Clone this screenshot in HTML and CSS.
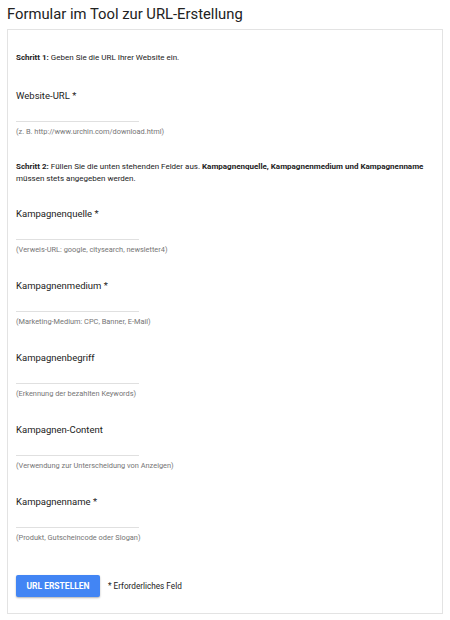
FILE: index.html
```html
<!DOCTYPE html>
<html lang="de">
<head>
<meta charset="utf-8">
<title>Formular im Tool zur URL-Erstellung</title>
<link rel="stylesheet" href="styles.css">
</head>
<body>
<h1 class="title">Formular im Tool zur URL-Erstellung</h1>
<form class="card">
  <p class="step">
    <b>Schritt 1:</b> Geben Sie die URL Ihrer Website ein.</p>
  <div class="field field-first">
    <label class="label">Website-URL *</label>
    <div class="input"></div>
    <div class="hint">(z. B. http://www.urchin.com/download.html)</div>
  </div>
  <p class="step step-two"><b>Schritt 2:</b> Füllen Sie die unten stehenden Felder aus. <b>Kampagnenquelle, Kampagnenmedium und Kampagnenname</b> müssen stets angegeben werden.</p>
  <div class="field">
    <label class="label">Kampagnenquelle *</label>
    <div class="input"></div>
    <div class="hint">(Verweis-URL: google, citysearch, newsletter4)</div>
  </div>
  <div class="field">
    <label class="label">Kampagnenmedium *</label>
    <div class="input"></div>
    <div class="hint">(Marketing-Medium: CPC, Banner, E-Mail)</div>
  </div>
  <div class="field">
    <label class="label">Kampagnenbegriff</label>
    <div class="input"></div>
    <div class="hint">(Erkennung der bezahlten Keywords)</div>
  </div>
  <div class="field">
    <label class="label">Kampagnen-Content</label>
    <div class="input"></div>
    <div class="hint">(Verwendung zur Unterscheidung von Anzeigen)</div>
  </div>
  <div class="field">
    <label class="label">Kampagnenname *</label>
    <div class="input"></div>
    <div class="hint">(Produkt, Gutscheincode oder Slogan)</div>
  </div>
  <div class="actions">
    <button type="button" class="btn">URL ERSTELLEN</button>
    <span class="req">* Erforderliches Feld</span>
  </div>
</form>
</body>
</html>
```
FILE: styles.css
```css
html, body {
  margin: 0;
  padding: 0;
  background: #ffffff;
}
body {
  font-family: Roboto, "Liberation Sans", Arial, sans-serif;
  color: #222222;
  padding: 0 7px;
}
.title {
  margin: 0;
  padding-top: 4px;
  height: 25px;
  font-size: 14.8px;
  line-height: 20px;
  font-weight: 400;
  color: #222222;
}
.card {
  box-sizing: border-box;
  width: 436px;
  border: 1px solid #e3e3e3;
  padding: 22px 8px 16px 8px;
  display: flex;
  flex-direction: column;
  gap: 24px;
}
.step {
  margin: 0;
  font-size: 8px;
  line-height: 12px;
  color: #222222;
}
.step b {
  font-weight: 700;
}
.step-two {
  margin-bottom: -2px;
}
.field {
  display: flex;
  flex-direction: column;
}
.field-first {
  margin-top: 1px;
}
.label {
  font-size: 9.5px;
  line-height: 14px;
  color: #222222;
}
.input {
  width: 123px;
  height: 18px;
  border-bottom: 1px solid #e0e0e0;
}
.hint {
  margin-top: 5px;
  font-size: 7.4px;
  line-height: 10px;
  color: #757575;
}
.actions {
  margin-top: 8px;
  display: flex;
  align-items: center;
  gap: 8px;
}
.btn {
  width: 84px;
  height: 22px;
  padding: 0;
  border: none;
  border-radius: 2px;
  background: #4285f4;
  color: #ffffff;
  font-family: Roboto, "Liberation Sans", Arial, sans-serif;
  font-size: 8.5px;
  font-weight: 700;
  box-shadow: 0 1px 2px rgba(0, 0, 0, 0.3);
}
.req {
  font-size: 8.2px;
  color: #222222;
}
```
